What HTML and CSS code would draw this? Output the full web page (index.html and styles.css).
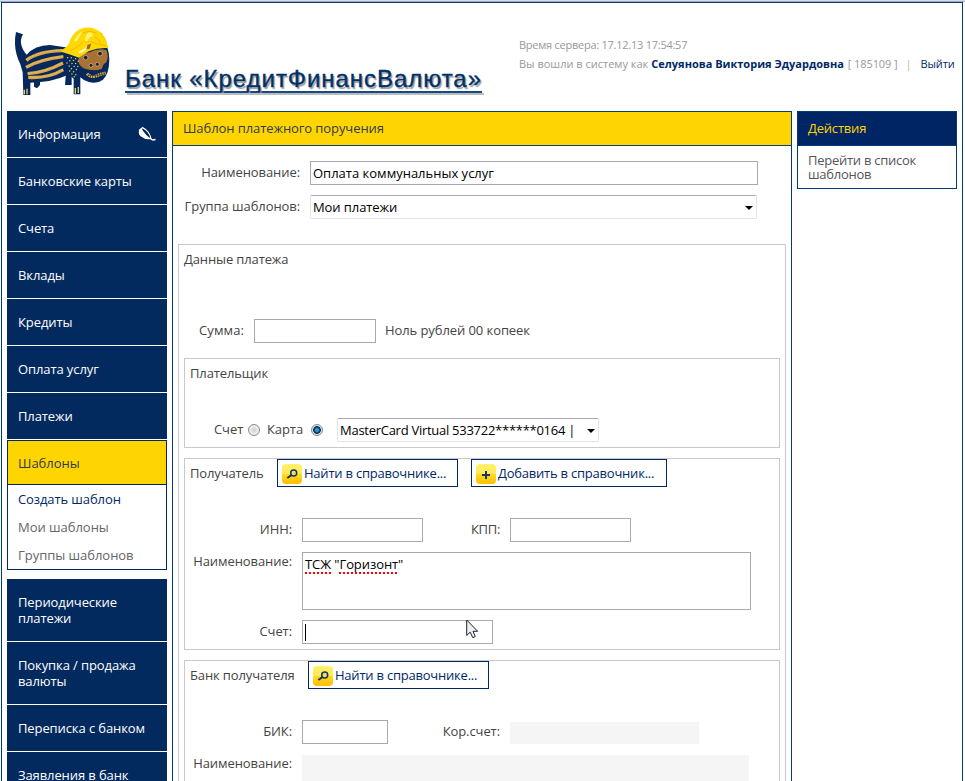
FILE: index.html
```html
<!DOCTYPE html>
<html lang="ru">
<head>
<meta charset="utf-8">
<title>Шаблон платежного поручения</title>
<link rel="stylesheet" href="styles.css">
</head>
<body>
<div class="frame">
  <header class="header">
    <svg class="logo" viewBox="0 0 315 240" width="105" height="80">
      <g fill="#06285d">
        <path d="M18 24L39 31Q31 46 33 58Q36 78 50 92Q74 64 120 63L166 70L184 78L216 80L270 28Q274 23 277 33L281 52Q298 72 298 108Q297 151 279 167Q260 181 237 174Q220 170 211 160L211 211H191V164Q182 154 171 154Q124 176 61 176V213H40L38 145L31 121Q16 91 15 61Q14 42 18 24Z"/>
        <path d="M72 174h18v9l-9 10-9-5zM168 145h17v38h-20z"/>
      </g>
      <g fill="none" stroke="#d8a449" stroke-width="10">
        <path d="M49 109Q84 82 157 80"/><path d="M48 130Q88 107 160 98"/><path d="M53 149Q105 146 159 117"/><path d="M55 160Q115 164 160 137"/>
      </g>
      <g fill="none" stroke="#f5d685" stroke-width="2" stroke-dasharray="3 2">
        <path d="M49 107Q84 81 157 78"/><path d="M48 129Q90 106 160 97"/><path d="M53 148Q105 144 159 116"/><path d="M55 159Q115 163 160 136"/>
      </g>
      <path d="M204 108Q214 86 239 85Q266 71 289 78Q298 98 289 115Q278 121 276 134Q257 143 231 136Q208 132 204 108Z" fill="#aa7136"/>
      <g fill="#16264a" stroke="#efc957" stroke-width="2">
        <circle cx="227" cy="101" r="7"/><circle cx="270" cy="89" r="7"/><circle cx="243" cy="124" r="6"/><circle cx="262" cy="121" r="6"/>
      </g>
      <path d="M231 149q12 13 27 7t29-9" stroke="#e5b431" stroke-width="9" stroke-dasharray="5 2" fill="none"/>
      <path d="M233 153q14 5 53-4" stroke="#2b3046" stroke-width="2" fill="none"/>
      <g stroke="#efc957" stroke-width="4.5" stroke-linecap="round" stroke-dasharray="0 11" fill="none">
        <path d="M173 101l32 44M184 101l22 30M171 117l27 36M179 141l14 18M197 104l8 8"/>
      </g>
      <path d="M43 197v14M51 194v17M196 192v17M205 189v18" stroke="#e4cf70" stroke-width="4"/>
      <path d="M155 78Q174 69 178 55Q187 26 212 14Q245 4 268 22Q291 40 292 64Q297 67 293 72Q264 70 236 82Q222 91 207 101Q183 92 154 83Z" fill="#ffd802"/>
      <path d="M191 52Q202 29 219 20L201 52ZM225 53Q223 33 238 24Q250 27 248 37Q234 37 233 55Z" fill="#fff36d"/>
      <path d="M180 80Q209 68 218 53M225 54Q241 49 263 60L287 65" stroke="#f3b800" stroke-width="3" fill="none"/>
      <path d="M206 86Q230 77 242 56" stroke="#fff8c5" stroke-width="6" fill="none"/>
      <path d="M229 76l3-13 12-6-5 17z" fill="#9a6a17"/><path d="M218 28q21-11 41 0M255 40q16 6 16 18" stroke="#f3b800" stroke-width="3" fill="none"/>
    </svg>
    <div class="bank"><span>Банк «КредитФинансВалюта»</span></div>
    <div class="session">
      <div class="time">Время сервера: 17.12.13 17:54:57</div>
      <div class="user"><span class="u1">Вы вошли в систему как</span><b>Селуянова Виктория Эдуардовна</b><span class="u2">[ 185109 ]</span><i>|</i><a>Выйти</a></div>
    </div>
  </header>
  <div class="columns">
    <nav class="menu">
      <a class="item"><span>Информация</span>
        <svg class="leaf" viewBox="0 0 18 14" width="18" height="14"><path d="M1 3.5L4.5 .7Q11 4 13 12L15 13 17.5 12.5" fill="none" stroke="#fff" stroke-width="1.3"/><path d="M2 2.5Q-1 6 3 9.5T13.5 12Q8 9 3.5 1.5Z" fill="#fff"/><path d="M5 2Q11 5 12 10.5Q8 7 5 2Z" fill="#032a5e"/></svg></a>
      <a class="item">Банковские карты</a>
      <a class="item">Счета</a>
      <a class="item">Вклады</a>
      <a class="item">Кредиты</a>
      <a class="item">Оплата услуг</a>
      <a class="item">Платежи</a>
      <div class="open">
        <a class="current">Шаблоны</a>
        <a class="sub picked">Создать шаблон</a>
        <a class="sub">Мои шаблоны</a>
        <a class="sub">Группы шаблонов</a>
      </div>
      <a class="item tall">Периодические платежи</a>
      <a class="item tall">Покупка / продажа валюты</a>
      <a class="item">Переписка с банком</a>
      <a class="item">Заявления в банк</a>
    </nav>
    <main class="main">
      <h1>Шаблон платежного поручения</h1>
      <div class="row r-name"><label>Наименование:</label><div class="field">Оплата коммунальных услуг</div></div>
      <div class="row r-group"><label>Группа шаблонов:</label><div class="select">Мои платежи</div></div>
      <section class="box payment">
        <h2>Данные платежа</h2>
        <div class="row r-sum"><label>Сумма:</label><div class="field"></div><span class="words">Ноль рублей 00 копеек</span></div>
        <section class="box payer">
          <h2>Плательщик</h2>
          <div class="row r-card"><span>Счет</span><span class="radio"></span><span>Карта</span><span class="radio on"></span><div class="select"><span>MasterCard Virtual 533722******0164 |</span></div></div>
        </section>
        <section class="box recipient">
          <div class="boxhead"><h2>Получатель</h2>
            <a class="btn find"><svg width="20" height="20" viewBox="0 0 20 20"><circle cx="11.7" cy="9" r="3"/><path d="M9.5 11.2L5.3 14"/></svg><span>Найти в справочнике...</span></a>
            <a class="btn add"><svg width="20" height="20" viewBox="0 0 20 20"><path d="M10 7v8M6 11h8"/></svg><span>Добавить в справочник...</span></a>
          </div>
          <div class="row r-inn"><label>ИНН:</label><div class="field w121"></div><label class="second">КПП:</label><div class="field w121"></div></div>
          <div class="row r-area"><label>Наименование:</label><div class="area"><u>ТСЖ</u> "<u>Горизонт</u>"</div></div>
          <div class="row r-acc"><label>Счет:</label><div class="field acc"><span class="caret"></span>
            <svg class="cursor" width="13" height="20" viewBox="0 0 13 20"><path d="M.7 1V16.5L4.2 13.2 6.8 18.7 9.3 17.5 7 12.3H11.7Z" fill="#eee" stroke="#1c2037" stroke-width="1"/></svg></div></div>
        </section>
        <section class="box rbank">
          <div class="boxhead"><h2>Банк получателя</h2>
            <a class="btn find"><svg width="20" height="20" viewBox="0 0 20 20"><circle cx="11.7" cy="9" r="3"/><path d="M9.5 11.2L5.3 14"/></svg><span>Найти в справочнике...</span></a>
          </div>
          <div class="row r-bik"><label>БИК:</label><div class="field w86"></div><label class="second">Кор.счет:</label><div class="ro corr"></div></div>
          <div class="row r-bname"><label>Наименование:</label><div class="ro bname"></div></div>
        </section>
      </section>
    </main>
    <aside class="actions">
      <h3>Действия</h3>
      <a>Перейти в список шаблонов</a>
    </aside>
  </div>
</div>
</body>
</html>
```
FILE: styles.css
```css
* { box-sizing: border-box; }
html, body { margin: 0; height: 781px; overflow: hidden; }
body { font: 13px/16px "Open Sans", sans-serif; color: #444; background: #fff; border-top: 1px solid #d6dde9; letter-spacing: -.08px; }
body::before { content: ""; display: block; height: 1px; background: #a3aac0; }
h1, h2, h3 { margin: 0; font-size: 13px; font-weight: 400; }
.frame { width: 962px; margin-left: 1px; height: 779px; overflow: hidden; border: 1px solid #003b79; border-bottom: 0; padding: 0 5px; background: #fff; }
.header { height: 108px; display: flex; }
.logo { display: block; margin: 21px 0 0 3px; flex: none; }
.bank { width: 357px; margin: 62px 0 0 10px; flex: none; font: 24px/30px "Liberation Sans", sans-serif; color: #003069; white-space: nowrap; }
.bank span { display: block; height: 28px; border-bottom: 2px solid #164985; line-height: 28px; -webkit-text-stroke: .35px #003069; letter-spacing: .95px; text-shadow: 1.5px 1.5px 1px #999; box-shadow: 2px 2px 1px 0 #bbb; clip-path: inset(0 -4px -4px 0); }
.bank span { box-shadow: none; filter: none; position: relative; }
.bank span::after { content: ""; position: absolute; left: 2px; right: -2px; bottom: -4px; height: 2px; background: #bbb; }
.session { margin: 34px 0 0 37px; color: #999; font-size: 11px; white-space: nowrap; }
.time { letter-spacing: -.25px; }
.user { display: flex; margin-top: 3px; letter-spacing: 0; }
.user b { color: #002866; margin-left: 3px; }
.user .u2 { margin-left: 4px; letter-spacing: -.1px; }
.user i { font-style: normal; color: #c9b48c; margin: 0 9px 0 8px; }
.user a { color: #002866; letter-spacing: -.15px; }
.columns { display: flex; gap: 5px; align-items: flex-start; }
.menu { width: 160px; flex: none; }
.item { display: flex; align-items: center; justify-content: space-between; height: 46px; margin-bottom: 1px; padding: 0 11px; background: #032a5e; color: #fff; letter-spacing: -.1px; }
.tall { height: 62px; padding-right: 25px; }
.open { height: 130px; border: 1px solid #002866; margin-bottom: 9px; }
.open a { display: block; padding-left: 10px; height: 28px; line-height: 28px; color: #666; letter-spacing: -.03px; }
.open .current { height: 44px; line-height: 45px; background: #ffd500; border-bottom: 1px solid #002866; color: #333a4d; }
.open .picked { color: #002866; letter-spacing: -.1px; }
.main { width: 620px; flex: none; height: 690px; border: 1px solid #003b79; }
.main h1 { height: 34px; background: #ffd500; border-bottom: 1px solid #003b79; padding-left: 10px; line-height: 33px; color: #333a4d; }
.row { display: flex; align-items: flex-start; white-space: nowrap; }
.row label { text-align: right; line-height: 22px; margin-right: 10px; flex: none; }
.field, .area { border: 1px solid #a9a9b1; height: 24px; line-height: 22px; padding-left: 2px; color: #000; background: #fff; flex: none; }
.select { position: relative; height: 24px; line-height: 22px; padding-left: 2px; color: #000; border: 1px solid #e1e3ee; border-top-color: #a9a9b1; border-radius: 2px; flex: none; overflow: hidden; }
.select::after { content: ""; position: absolute; right: 3px; top: 10px; border: 4px solid transparent; border-top-color: #000; border-bottom: 0; }
.r-name { margin-top: 15px; }
.r-name label, .r-group label { width: 127px; }
.r-name .field { width: 448px; letter-spacing: 0; }
.r-group { margin-top: 10px; }
.r-group .select { width: 447px; }
.box { border: 1px solid #c9c9c9; }
.box h2 { padding-left: 5px; line-height: 28px; color: #444; letter-spacing: -.13px; }
.payment { width: 608px; margin: 25px 0 0 5px; height: 560px; }
.r-sum { margin-top: 46px; }
.r-sum label { width: 65px; letter-spacing: .1px; }
.r-sum .field { width: 122px; }
.words { margin-left: 9px; line-height: 22px; }
.payer, .recipient, .rbank { width: 596px; margin-left: 5px; }
.payer { height: 90px; margin-top: 15px; }
.r-card { margin: 31px 0 0 29px; line-height: 22px; }
.r-card > span:first-child { width: 29px; }
.radio { width: 12px; height: 12px; margin: 6px 7px 0 5px; border: 1px solid #8c8c8c; border-radius: 50%; background: radial-gradient(circle, #ccc, #eee 55%, #ddd); flex: none; }
.radio + span { width: 36px; }
.radio.on { margin-left: 8px; margin-right: 14px; background: radial-gradient(circle, #2897d2 0 1.5px, #092f58 3px 3.5px, #ddd 4.2px); }
.r-card .select { width: 262px; letter-spacing: -.27px; }
.recipient { height: 192px; margin-top: 10px; }
.boxhead { display: flex; height: 28px; }
.btn { display: flex; align-items: center; height: 28px; border: 1px solid #002866; color: #002866; padding-left: 4px; white-space: nowrap; background: #fff; letter-spacing: -.22px; }
.btn svg { background: linear-gradient(#fff26d, #ffe75a 49%, #ffda25 51%, #ffbe00); border-radius: 4px; margin: 2px 2px 0 0; flex: none; }
.btn svg path { fill: none; stroke: #16375f; stroke-width: 2; }
.btn svg circle { fill: #f3db68; stroke: #16375f; stroke-width: 1.5; }
.find { width: 181px; }
.add { width: 196px; margin-left: 13px; }
.recipient h2 { width: 92px; }
.rbank h2 { width: 123px; }
.r-inn, .r-bik { margin-top: 31px; }
.recipient label, .rbank label { width: 107px; }
.w121 { width: 121px; }
.w86 { width: 86px; }
.recipient .second { width: 77px; letter-spacing: -.3px; }
.r-area { margin-top: 10px; }
.r-area label { line-height: 19px; }
.area { width: 449px; height: 58px; }
.area u { text-decoration: underline dotted #f00 2px; text-underline-offset: 3px; text-decoration-skip-ink: none; }
.r-acc { margin-top: 10px; }
.acc { width: 191px; position: relative; }
.caret { display: block; width: 1px; height: 17px; background: #000; margin-top: 3px; }
.cursor { position: absolute; left: 163px; top: -2px; }
.rbank { height: 180px; margin-top: 10px; }
.rbank .second { width: 112px; }
.ro { background: #f5f5f5; }
.corr { width: 189px; height: 22px; margin-top: 2px; }
.r-bname { margin-top: 11px; }
.r-bname label { line-height: 17px; }
.bname { width: 447px; height: 50px; }
.actions { width: 160px; border: 1px solid #003b79; height: 78px; flex: none; }
.actions h3 { height: 34px; line-height: 33px; padding-left: 10px; background: #002564; color: #ffd500; border-bottom: 1px solid #003b79; letter-spacing: -.2px; }
.actions a { display: block; padding: 7px 10px; line-height: 14px; color: #555; letter-spacing: -.27px; }
```
